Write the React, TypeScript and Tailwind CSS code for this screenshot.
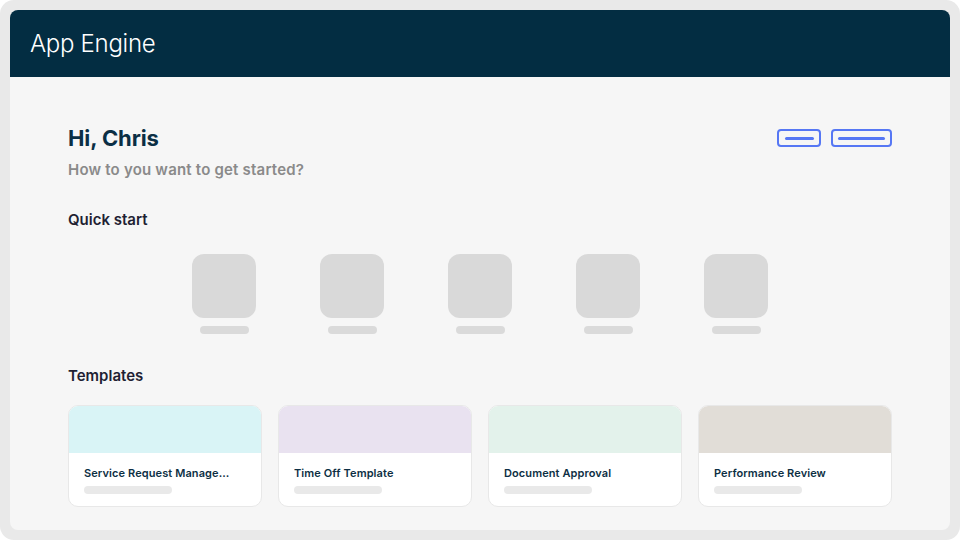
import React from 'react';

const quickStart = [0, 1, 2, 3, 4];

const templates = [
  { name: 'Service Request Manage...', color: 'bg-[#d9f4f6]' },
  { name: 'Time Off Template', color: 'bg-[#e9e2f0]' },
  { name: 'Document Approval', color: 'bg-[#e3f2eb]' },
  { name: 'Performance Review', color: 'bg-[#e1ddd7]' },
];

export default function App() {
  return (
    <div className="w-[960px] h-[540px] bg-white">
      <div
        className="w-full h-full bg-[#e9e9e9] rounded-[14px] p-[10px] flex"
        style={{ fontFamily: 'Inter, "Noto Sans", sans-serif' }}
      >
        <div className="flex-1 flex flex-col rounded-[8px] overflow-hidden">
          {/* Header */}
          <div className="h-[67px] bg-[#032d42] flex items-center px-5 shrink-0">
            <span className="text-white text-[24px] font-light tracking-[-0.3px]">App Engine</span>
          </div>

          {/* Content */}
          <div className="flex-1 bg-[#f6f6f6] px-[58px] pt-[47px]">
            <div className="flex justify-between items-start">
              <h1 className="text-[22px] leading-[28px] font-bold text-[#0b2f45] tracking-[-0.1px]">Hi, Chris</h1>
              <div className="flex gap-[10px] mt-[5px]">
                <div className="w-[44px] h-[18px] border-2 border-[#5677f4] rounded-[4px] flex items-center justify-center">
                  <div className="w-[29px] h-[3px] rounded-full bg-[#5677f4]" />
                </div>
                <div className="w-[61px] h-[18px] border-2 border-[#5677f4] rounded-[4px] flex items-center justify-center">
                  <div className="w-[47px] h-[3px] rounded-full bg-[#5677f4]" />
                </div>
              </div>
            </div>
            <p className="mt-2 text-[15px] leading-[20px] font-semibold text-[#8a8a8a] tracking-[0.2px]">How to you want to get started?</p>

            <h2 className="mt-[30px] text-[15px] leading-[20px] font-semibold text-[#1f1f33]">Quick start</h2>
            <div className="mt-[24px] flex justify-center gap-16">
              {quickStart.map((i) => (
                <div key={i} className="flex flex-col items-center">
                  <div className="w-16 h-16 rounded-[12px] bg-[#d9d9d9]" />
                  <div className="mt-2 w-[49px] h-2 rounded-full bg-[#dadada]" />
                </div>
              ))}
            </div>

            <h2 className="mt-[32px] text-[15px] leading-[20px] font-semibold text-[#1f1f33]">Templates</h2>
            <div className="mt-[19px] grid grid-cols-4 gap-4">
              {templates.map((t) => (
                <div key={t.name} className="h-[102px] bg-white border border-[#e8e8e8] rounded-[10px] overflow-hidden flex flex-col">
                  <div className={`h-[47px] shrink-0 ${t.color}`} />
                  <div className="px-[15px] pt-[12px]">
                    <div className="text-[11px] leading-[16px] font-semibold text-[#0d2f44] tracking-[0.1px] truncate">{t.name}</div>
                    <div className="mt-[5px] w-[88px] h-2 rounded-full bg-[#e9e9e9]" />
                  </div>
                </div>
              ))}
            </div>
          </div>
        </div>
      </div>
    </div>
  );
}
